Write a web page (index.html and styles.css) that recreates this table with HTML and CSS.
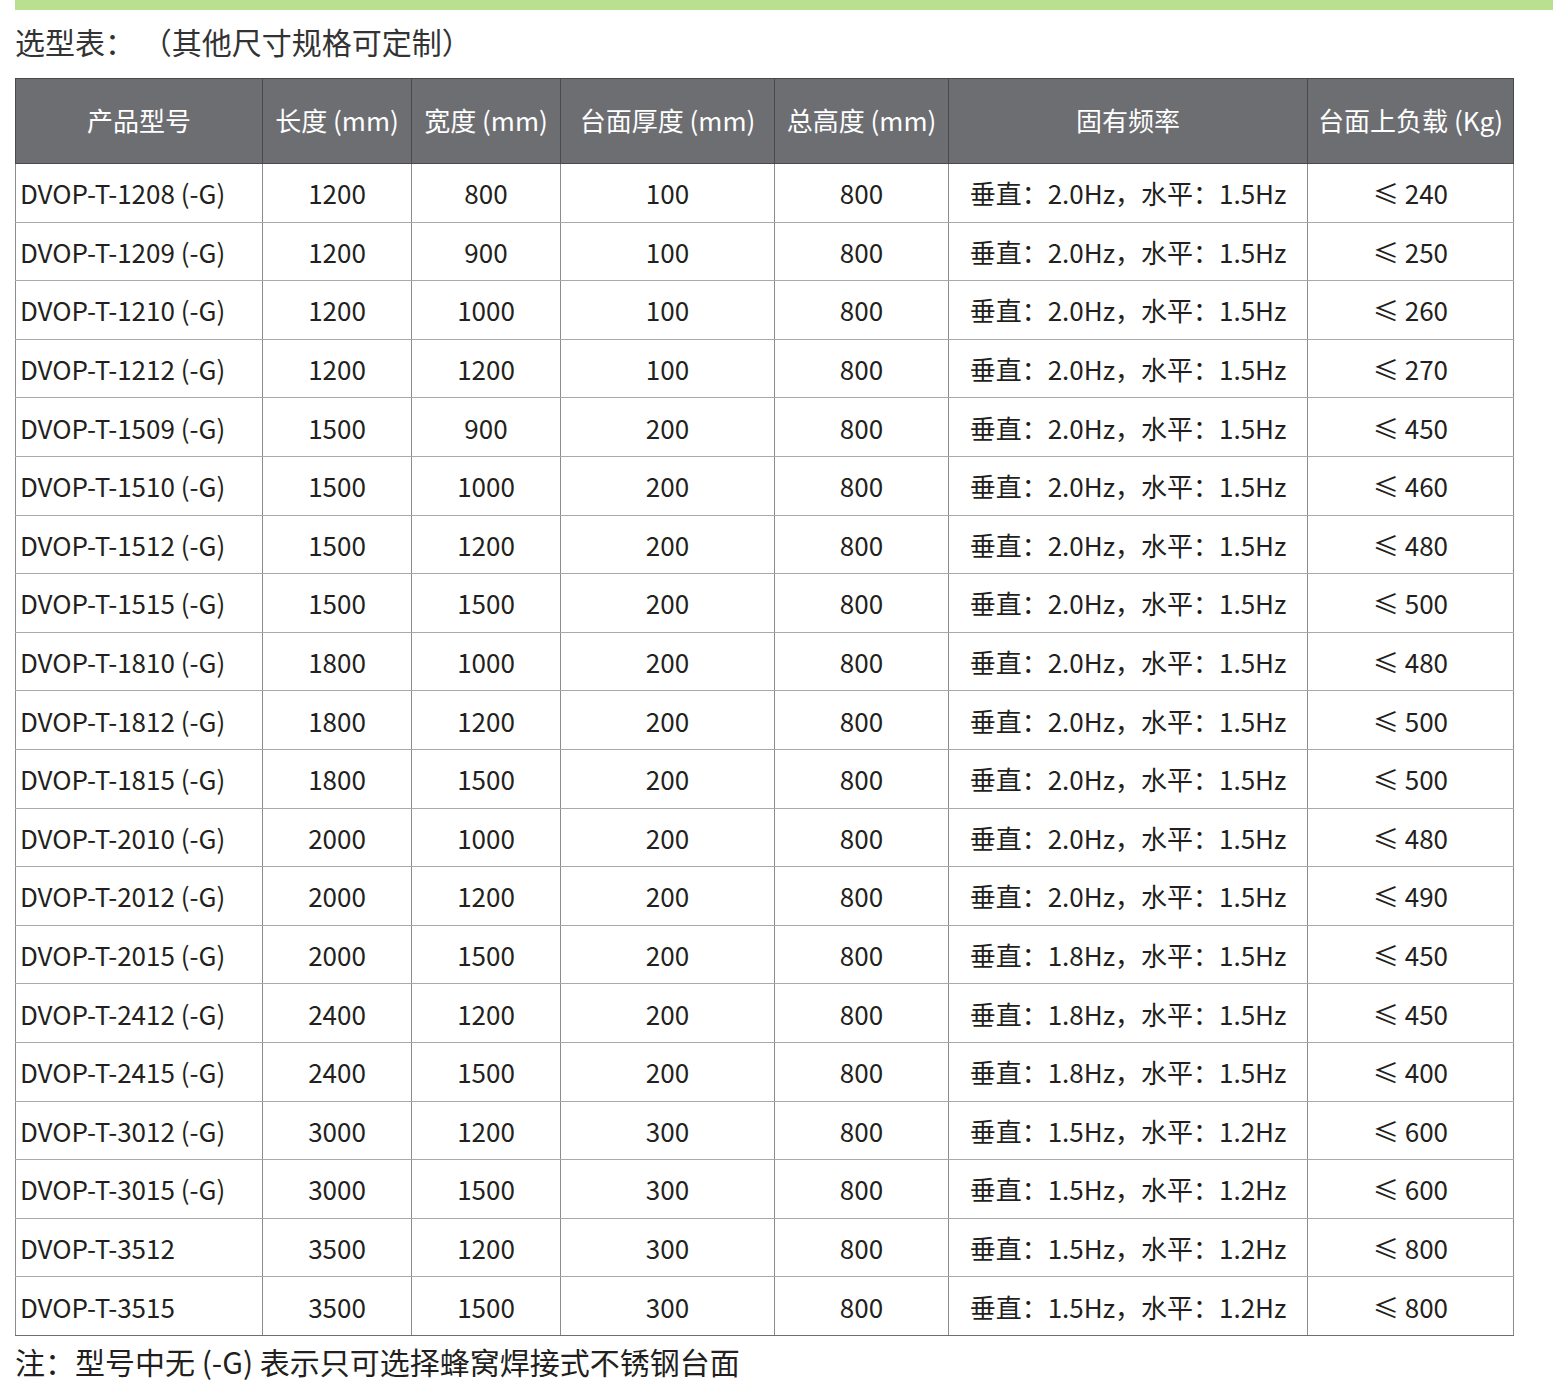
FILE: index.html
```html
<!DOCTYPE html>
<html lang="zh-CN">
<head>
<meta charset="utf-8">
<title>选型表</title>
<link rel="stylesheet" href="styles.css">
</head>
<body>
<div class="topbar"></div>
<h2 class="title">选型表： （其他尺寸规格可定制）</h2>
<table class="spec">
  <colgroup>
    <col class="c1"><col class="c2"><col class="c3"><col class="c4"><col class="c5"><col class="c6"><col class="c7">
  </colgroup>
  <thead>
    <tr>
      <th>产品型号</th><th>长度 (mm)</th><th>宽度 (mm)</th><th>台面厚度 (mm)</th><th>总高度 (mm)</th><th>固有频率</th><th>台面上负载 (Kg)</th>
    </tr>
  </thead>
  <tbody>
    <tr><td>DVOP-T-1208 (-G)</td><td>1200</td><td>800</td><td>100</td><td>800</td><td>垂直：2.0Hz，水平：1.5Hz</td><td>≤ 240</td></tr>
    <tr><td>DVOP-T-1209 (-G)</td><td>1200</td><td>900</td><td>100</td><td>800</td><td>垂直：2.0Hz，水平：1.5Hz</td><td>≤ 250</td></tr>
    <tr><td>DVOP-T-1210 (-G)</td><td>1200</td><td>1000</td><td>100</td><td>800</td><td>垂直：2.0Hz，水平：1.5Hz</td><td>≤ 260</td></tr>
    <tr><td>DVOP-T-1212 (-G)</td><td>1200</td><td>1200</td><td>100</td><td>800</td><td>垂直：2.0Hz，水平：1.5Hz</td><td>≤ 270</td></tr>
    <tr><td>DVOP-T-1509 (-G)</td><td>1500</td><td>900</td><td>200</td><td>800</td><td>垂直：2.0Hz，水平：1.5Hz</td><td>≤ 450</td></tr>
    <tr><td>DVOP-T-1510 (-G)</td><td>1500</td><td>1000</td><td>200</td><td>800</td><td>垂直：2.0Hz，水平：1.5Hz</td><td>≤ 460</td></tr>
    <tr><td>DVOP-T-1512 (-G)</td><td>1500</td><td>1200</td><td>200</td><td>800</td><td>垂直：2.0Hz，水平：1.5Hz</td><td>≤ 480</td></tr>
    <tr><td>DVOP-T-1515 (-G)</td><td>1500</td><td>1500</td><td>200</td><td>800</td><td>垂直：2.0Hz，水平：1.5Hz</td><td>≤ 500</td></tr>
    <tr><td>DVOP-T-1810 (-G)</td><td>1800</td><td>1000</td><td>200</td><td>800</td><td>垂直：2.0Hz，水平：1.5Hz</td><td>≤ 480</td></tr>
    <tr><td>DVOP-T-1812 (-G)</td><td>1800</td><td>1200</td><td>200</td><td>800</td><td>垂直：2.0Hz，水平：1.5Hz</td><td>≤ 500</td></tr>
    <tr><td>DVOP-T-1815 (-G)</td><td>1800</td><td>1500</td><td>200</td><td>800</td><td>垂直：2.0Hz，水平：1.5Hz</td><td>≤ 500</td></tr>
    <tr><td>DVOP-T-2010 (-G)</td><td>2000</td><td>1000</td><td>200</td><td>800</td><td>垂直：2.0Hz，水平：1.5Hz</td><td>≤ 480</td></tr>
    <tr><td>DVOP-T-2012 (-G)</td><td>2000</td><td>1200</td><td>200</td><td>800</td><td>垂直：2.0Hz，水平：1.5Hz</td><td>≤ 490</td></tr>
    <tr><td>DVOP-T-2015 (-G)</td><td>2000</td><td>1500</td><td>200</td><td>800</td><td>垂直：1.8Hz，水平：1.5Hz</td><td>≤ 450</td></tr>
    <tr><td>DVOP-T-2412 (-G)</td><td>2400</td><td>1200</td><td>200</td><td>800</td><td>垂直：1.8Hz，水平：1.5Hz</td><td>≤ 450</td></tr>
    <tr><td>DVOP-T-2415 (-G)</td><td>2400</td><td>1500</td><td>200</td><td>800</td><td>垂直：1.8Hz，水平：1.5Hz</td><td>≤ 400</td></tr>
    <tr><td>DVOP-T-3012 (-G)</td><td>3000</td><td>1200</td><td>300</td><td>800</td><td>垂直：1.5Hz，水平：1.2Hz</td><td>≤ 600</td></tr>
    <tr><td>DVOP-T-3015 (-G)</td><td>3000</td><td>1500</td><td>300</td><td>800</td><td>垂直：1.5Hz，水平：1.2Hz</td><td>≤ 600</td></tr>
    <tr><td>DVOP-T-3512</td><td>3500</td><td>1200</td><td>300</td><td>800</td><td>垂直：1.5Hz，水平：1.2Hz</td><td>≤ 800</td></tr>
    <tr><td>DVOP-T-3515</td><td>3500</td><td>1500</td><td>300</td><td>800</td><td>垂直：1.5Hz，水平：1.2Hz</td><td>≤ 800</td></tr>
  </tbody>
</table>
<p class="note">注：型号中无 (-G) 表示只可选择蜂窝焊接式不锈钢台面</p>
</body>
</html>
```
FILE: styles.css
```css
html, body {
  margin: 0;
  padding: 0;
  background: #ffffff;
}
body {
  font-family: "Noto Sans CJK SC", "Noto Sans", sans-serif;
  color: #231f20;
}
.topbar {
  margin-left: 15px;
  width: 1538px;
  height: 10px;
  background: #b8e08e;
}
.title {
  margin: 0 0 0 15px;
  height: 68px;
  line-height: 62px;
  font-size: 30px;
  font-weight: 400;
  color: #333333;
}
.spec {
  margin-left: 15px;
  width: 1498px;
  table-layout: fixed;
  border-collapse: collapse;
  font-size: 26px;
}
.c1 { width: 247px; }
.c2 { width: 149px; }
.c3 { width: 149px; }
.c4 { width: 214px; }
.c5 { width: 174px; }
.c6 { width: 359px; }
.c7 { width: 206px; }
.spec th {
  height: 81px;
  padding: 0 0 3px;
  background: #6d6e72;
  color: #ffffff;
  font-weight: 400;
  text-align: center;
  border: 1px solid #4a4a4d;
}
.spec td {
  height: 57.6px;
  padding: 0;
  text-align: center;
  border: 1px solid #8c8c8c;
  border-top-color: #a9a9a9;
  border-bottom-color: #a9a9a9;
  white-space: nowrap;
}
.spec td:first-child {
  text-align: left;
  padding-left: 4px;
}
.spec tbody tr:last-child td {
  border-bottom-color: #6e6e6e;
}
.note {
  margin: 0 0 0 15px;
  height: 52px;
  line-height: 50px;
  font-size: 30px;
  color: #231f20;
}
```
